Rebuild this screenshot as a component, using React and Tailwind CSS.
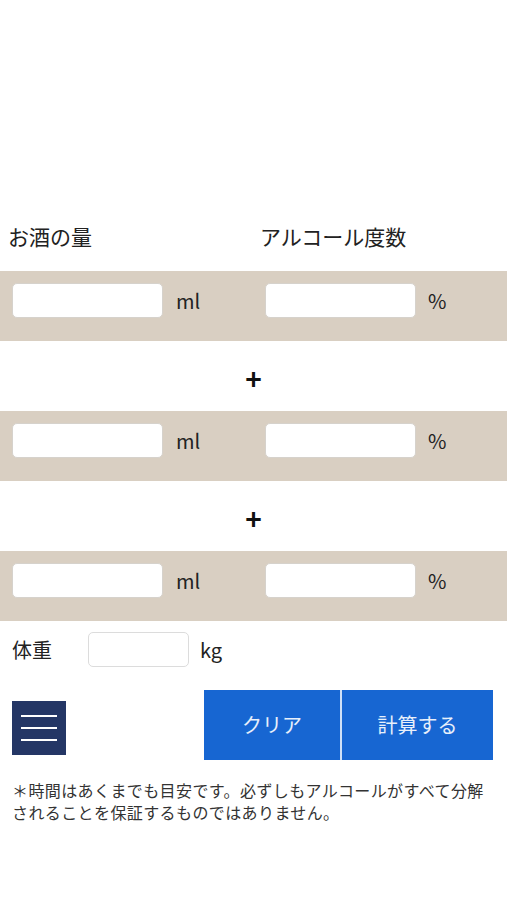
import { useState } from 'react'

const FONT = { fontFamily: '"Noto Sans CJK JP", "Noto Sans", sans-serif' }

function DrinkRow({ amount, abv, onAmount, onAbv }) {
  return (
    <div className="h-[70px] bg-[#d9cfc2] pt-[12px]">
      <div className="grid grid-cols-[253px_1fr] pl-[12px]">
        <div className="flex items-center h-[35px]">
          <input
            value={amount}
            onChange={onAmount}
            inputMode="decimal"
            className="w-[151px] h-[35px] bg-white rounded-[5px] border border-[#d6d2cc] px-2 text-[18px] outline-none"
          />
          <span className="ml-[13px] text-[20px] text-[#222]">ml</span>
        </div>
        <div className="flex items-center h-[35px]">
          <input
            value={abv}
            onChange={onAbv}
            inputMode="decimal"
            className="w-[151px] h-[35px] bg-white rounded-[5px] border border-[#d6d2cc] px-2 text-[18px] outline-none"
          />
          <span className="ml-[12px] text-[20px] text-[#222]">%</span>
        </div>
      </div>
    </div>
  )
}

function Plus() {
  return (
    <div className="h-[70px] flex items-center justify-center">
      <span className="text-[28px] font-bold leading-none text-[#111] mt-[4px]">+</span>
    </div>
  )
}

export default function App() {
  const empty = [{ amount: '', abv: '' }, { amount: '', abv: '' }, { amount: '', abv: '' }]
  const [drinks, setDrinks] = useState(empty)
  const [weight, setWeight] = useState('')

  const update = (i, key) => (e) => {
    const v = e.target.value
    setDrinks(ds => ds.map((d, j) => (j === i ? { ...d, [key]: v } : d)))
  }

  const clear = () => { setDrinks(empty); setWeight('') }

  return (
    <div className="w-[507px] min-h-[900px] bg-white text-[#222]" style={FONT}>
      <div className="h-[222px]" />

      {/* labels */}
      <div className="flex items-center h-[30px] mb-[19px] pl-[8px]">
        <div className="w-[252px] text-[21px]">お酒の量</div>
        <div className="text-[21px]">アルコール度数</div>
      </div>

      {drinks.map((d, i) => (
        <div key={i}>
          {i > 0 && <Plus />}
          <DrinkRow
            amount={d.amount}
            abv={d.abv}
            onAmount={update(i, 'amount')}
            onAbv={update(i, 'abv')}
          />
        </div>
      ))}

      {/* weight */}
      <div className="flex items-center pl-[12px] pt-[11px] h-[46px]">
        <span className="w-[76px] text-[20px]">体重</span>
        <input
          value={weight}
          onChange={e => setWeight(e.target.value)}
          inputMode="decimal"
          className="w-[101px] h-[35px] bg-white rounded-[5px] border border-[#dcdcdc] px-2 text-[18px] outline-none"
        />
        <span className="ml-[11px] text-[20px]">kg</span>
      </div>

      {/* buttons */}
      <div className="flex items-start mt-[23px] h-[70px]">
        <button className="ml-[12px] mt-[11px] w-[54px] h-[54px] bg-[#243665] flex flex-col items-center justify-center gap-[10px]">
          <span className="block w-[36px] h-[2px] bg-white" />
          <span className="block w-[36px] h-[2px] bg-white" />
          <span className="block w-[36px] h-[2px] bg-white" />
        </button>
        <div className="ml-[138px] flex h-[70px]">
          <button
            onClick={clear}
            className="w-[136px] h-[70px] bg-[#1766d2] text-white/90 text-[20px]"
          >
            クリア
          </button>
          <div className="w-[2px] h-[70px] bg-[#cfe0f7]" />
          <button className="w-[151px] h-[70px] bg-[#1766d2] text-white/90 text-[20px]">
            計算する
          </button>
        </div>
      </div>

      {/* note */}
      <p className="mt-[19px] pl-[12px] text-[16px] leading-[22px] text-[#333] tracking-[0.4px]">
        ＊時間はあくまでも目安です。必ずしもアルコールがすべて分解
        <br />
        されることを保証するものではありません。
      </p>
    </div>
  )
}
